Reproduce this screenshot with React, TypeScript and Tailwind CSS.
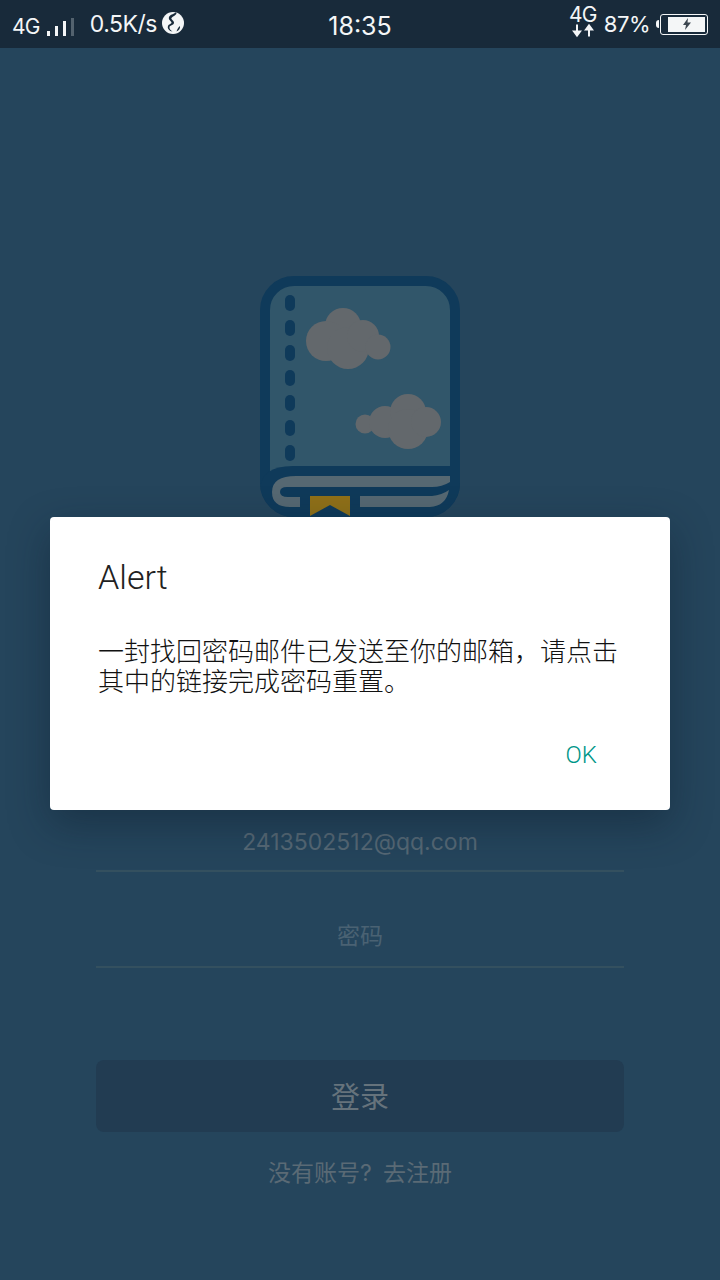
const sans = "font-['Inter','Noto_Sans_CJK_SC',sans-serif]";
const roboto = "font-['Roboto','Noto_Sans_CJK_SC',sans-serif]";

function GlobeIcon() {
  return (
    <svg width="24" height="26" viewBox="0 0 24 26" className="mb-[4px] ml-[4px]">
      <circle cx="12" cy="14" r="11" fill="#f4f6f7" />
      <path d="M15 3.500c2 2-3 3.500-4.500 5.500-1 1.500 3 2.500 2.500 5-.5 2.500-4 2-4.500 4-.3 1.500 1 3.500 3 4.500-3-.2-5.500-3-4.500-5.500.8-2 3.500-2 3.500-3.500 0-1.500-3.500-2.500-2.500-5.500 1-2.500 5-3 6.500-4.500z" fill="#182a3a" />
      <path d="M19 17c.5 2-1 4.500-3.500 5.500.5-1.500 1.500-4 3.500-5.500z" fill="#182a3a" />
    </svg>
  );
}

function BatteryIcon() {
  return (
    <div className="ml-[6px] flex items-center">
      <div className="h-[8px] w-[3px] rounded-l-full bg-[#f4f6f7]" />
      <div className="ml-[1px] flex h-[21px] w-[48px] items-center justify-end rounded-[3px] border border-[#f4f6f7] p-[2px]">
        <div className="flex h-full w-[87%] items-center justify-center bg-[#f4f6f7]">
          <svg width="10" height="12" viewBox="0 0 10 12">
            <path d="M6 0 1 7h3l-1 5 6-7.500H5.500z" fill="#3c4650" />
          </svg>
        </div>
      </div>
    </div>
  );
}

function StatusBar() {
  return (
    <div className={`grid h-[48px] grid-cols-[1fr_auto_1fr] items-center bg-[#182a3a] text-[#f4f6f7] ${sans}`}>
      <div className="flex items-center pl-[12px]">
        <span className="mt-[5px] text-[21px] leading-none tracking-[-0.7px]">4G</span>
        <div className="mt-[5px] ml-[7px] flex h-[18px] items-end gap-[5px]">
          <div className="h-[5px] w-[3px] bg-[#f4f6f7]" />
          <div className="h-[10px] w-[3px] bg-[#f4f6f7]" />
          <div className="h-[15px] w-[3px] bg-[#f4f6f7]" />
          <div className="h-[18px] w-[3px] bg-[#53626e]" />
        </div>
        <span className="ml-[16px] text-[23px] leading-none tracking-[-0.5px]">0.5K/s</span>
        <GlobeIcon />
      </div>
      <span className="mt-[4px] text-[25px] leading-none">18:35</span>
      <div className="flex items-center justify-end pr-[12px]">
        <div className="mb-[3px] flex w-[28px] flex-col items-center">
          <span className="text-[21px] leading-[16px] tracking-[-0.8px]">4G</span>
          <svg width="24" height="15" viewBox="0 0 24 14">
            <path d="M6 1v8M3 8l3 4 3-4zM18 13V5M15 6l3-4 3 4z" stroke="#f4f6f7" strokeWidth="2" fill="#f4f6f7" />
          </svg>
        </div>
        <span className="ml-[7px] text-[22px] leading-none tracking-[-0.5px]">87%</span>
        <BatteryIcon />
      </div>
    </div>
  );
}

function BookLogo() {
  return (
    <svg width="200" height="241" viewBox="0 0 200 241" className="mx-auto">
      <defs>
        <clipPath id="bookShape">
          <rect x="0" y="0" width="200" height="241" rx="34" />
        </clipPath>
      </defs>
      <rect x="5" y="5" width="190" height="231" rx="29" fill="#31566a" stroke="#0f3a5a" strokeWidth="10" />
      {[27, 52, 77, 102, 127, 152, 177].map((y) => (
        <rect key={y} x="25" y={y - 8} width="10" height="16" rx="5" fill="#0f3a5a" />
      ))}
      <g fill="#63686c">
        <circle cx="83" cy="50" r="18" />
        <circle cx="66" cy="65" r="20" />
        <circle cx="88" cy="72" r="21" />
        <circle cx="103" cy="60" r="16" />
        <circle cx="118" cy="71" r="12.500" />
        <circle cx="105" cy="148" r="9.500" />
        <circle cx="125" cy="146" r="16" />
        <circle cx="148" cy="136" r="18" />
        <circle cx="148" cy="153" r="20" />
        <circle cx="166" cy="146" r="15" />
      </g>
      <g clipPath="url(#bookShape)">
        <path d="M0 241V215Q0 190 33 190H200V241z" fill="#0f3a5a" />
        <path d="M36 200H190V206Q182 211 172 211H27Q20 211 20 216Q20 221 28 221H40V231H30Q12 231 12 216Q12 200 36 200z" fill="#566872" />
        <path d="M100 220H172Q182 219 189 214Q186 230 170 231H100z" fill="#566872" />
        <path d="M50 220H90V240L70 229 50 240z" fill="#8f7018" />
      </g>
    </svg>
  );
}

function Field({ value, email }: { value: string; email?: boolean }) {
  return (
    <div className="flex h-[96px] items-end justify-center border-b-2 border-[#34505f]">
      <span className={`text-[23px] leading-[32px] ${email ? 'mb-[12px] text-[#566875]' : 'mb-[14px] text-[#4a6273]'}`}>{value}</span>
    </div>
  );
}

export default function App() {
  return (
    <div className={`relative h-[1280px] w-[720px] overflow-hidden bg-[#25455c] ${sans}`}>
      <StatusBar />

      {/* login page behind the dialog */}
      <div className="px-[96px] pt-[228px]">
        <BookLogo />
        <div className="mt-[259px]">
          <Field value="2413502512@qq.com" email />
          <Field value="密码" />
        </div>
        <div className="mt-[92px] flex h-[72px] items-center justify-center rounded-[8px] bg-[#223c52] pt-[3px] text-[29px] text-[#66737c]">
          登录
        </div>
        <p className="mt-[25px] text-center text-[23px] leading-[32px] text-[#5a6a75] [word-spacing:5px]">没有账号? 去注册</p>
      </div>

      {/* alert dialog */}
      <div className="absolute top-[517px] left-[50px] h-[293px] w-[620px] rounded-[4px] bg-white pt-[40px] pr-[48px] pl-[48px] shadow-[0_14px_40px_rgba(10,25,40,0.4)]">
        <h2 className={`text-[34px] leading-[40px] font-light text-[#212121] ${roboto}`}>Alert</h2>
        <p className="mt-[40px] text-[26px] leading-[30px] font-light text-[#111111]">
          一封找回密码邮件已发送至你的邮箱，请点击其中的链接完成密码重置。
        </p>
        <div className="mt-[42px] flex justify-end pr-[25px]">
          <span className={`text-[24px] leading-[32px] font-light text-[#009688] ${roboto}`}>OK</span>
        </div>
      </div>
    </div>
  );
}
